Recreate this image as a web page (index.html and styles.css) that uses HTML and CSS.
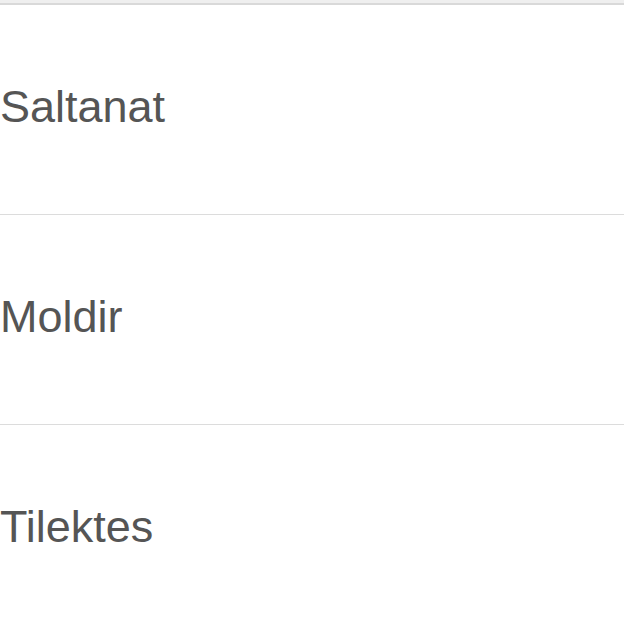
FILE: index.html
```html
<!DOCTYPE html>
<html>
<head>
<meta charset="utf-8">
<link rel="stylesheet" href="styles.css">
</head>
<body>
<div class="topbar"></div>
<ul class="list">
  <li class="item">Saltanat</li>
  <li class="item">Moldir</li>
  <li class="item">Tilektes</li>
</ul>
</body>
</html>
```
FILE: styles.css
```css
html, body {
  margin: 0;
  padding: 0;
  background: #fff;
}
body {
  font-family: "Liberation Sans", Arial, sans-serif;
  color: #555;
  overflow: hidden;
}
.topbar {
  height: 3px;
  background: #efefef;
  border-bottom: 2px solid #d9d9d9;
}
.list {
  list-style: none;
  margin: 0;
  padding: 0;
}
.item {
  box-sizing: border-box;
  height: 210px;
  border-bottom: 1px solid #dcdcdc;
  display: flex;
  align-items: center;
  font-size: 45px;
  padding-bottom: 6px;
}
```
